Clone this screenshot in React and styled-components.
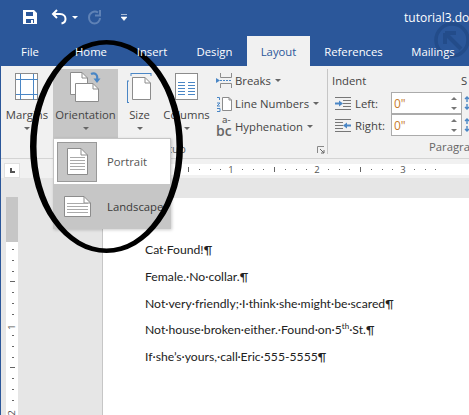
import styled, { createGlobalStyle } from "styled-components";

const blue = "#2b579a";
const iconBlue = "#4a86c5";
const line = "#8c8c8c";

const Global = createGlobalStyle`
  html, body { margin: 0; padding: 0; background: #fff; overflow: hidden; }
  body { width: 469px; height: 415px; }
  * { box-sizing: border-box; }
`;

const Window = styled.div`
  position: relative;
  width: 469px;
  height: 415px;
  overflow: hidden;
  font-family: "Open Sans", "Noto Sans", sans-serif;
  font-size: 11.3px;
  color: #444;
  background: #e6e6e6;
  border-left: 1px solid ${blue};
`;

const TitleBar = styled.div`
  height: 36px;
  margin-left: -1px;
  background: ${blue};
  display: flex;
  align-items: center;
  color: #fff;
  padding: 0 0 2px 22px;
`;
const Qat = styled.div`
  display: flex;
  align-items: center;
  width: 382px;
  flex: none;
  svg { flex: none; }
`;
const Title = styled.div`
  position: relative;
  z-index: 1;
  font-size: 12px;
  white-space: nowrap;
`;

const TabBar = styled.div`
  position: relative;
  height: 30px;
  margin-left: -1px;
  background: ${blue};
  display: flex;
`;
const Tab = styled.div`
  position: relative;
  z-index: 1;
  width: ${(p) => p.$w}px;
  flex: none;
  display: flex;
  align-items: center;
  justify-content: center;
  font-size: 11.3px;
  color: ${(p) => (p.$active ? blue : "#fff")};
  background: ${(p) => (p.$active ? "#f1f1f1" : "transparent")};
`;
const Watermark = styled.svg`
  position: absolute;
  right: -3px;
  top: -16px;
`;

const Ribbon = styled.div`
  height: 92px;
  background: #f1f1f1;
  display: flex;
  padding-top: 3px;
`;
const Group = styled.div`
  position: relative;
  width: ${(p) => p.$w}px;
  flex: none;
  display: flex;
  flex-direction: column;
  border-right: ${(p) => (p.$sep ? "1px solid #c6c6c6" : "none")};
  height: 85px;
`;
const GroupBody = styled.div`
  height: 69px;
  display: flex;
`;
const GroupLabel = styled.div`
  height: 15px;
  margin-top: 3px;
  padding-left: ${(p) => p.$left}px;
  line-height: 15px;
  color: #666;
  white-space: nowrap;
`;
const Expander = styled.svg`
  position: absolute;
  right: 2px;
  bottom: 0;
`;
const BigButton = styled.div`
  width: ${(p) => p.$w}px;
  flex: none;
  display: flex;
  flex-direction: column;
  align-items: center;
  background: ${(p) => (p.$on ? "#c6c6c6" : "transparent")};
  svg { flex: none; }
`;
const BigIcon = styled.div`
  height: 36px;
  display: flex;
  align-items: flex-start;
  justify-content: center;
`;
const BigLabel = styled.div`
  margin-top: 1px;
  height: 17px;
  line-height: 17px;
  white-space: nowrap;
`;
const Caret = styled.span`
  display: inline-block;
  flex: none;
  width: 0;
  height: 0;
  margin: ${(p) => p.$m || "0"};
  border-left: 3px solid transparent;
  border-right: 3px solid transparent;
  border-top: 3px solid ${(p) => p.$c || "#666"};
`;
const SmallStack = styled.div`
  display: flex;
  flex-direction: column;
  margin-left: 4px;
`;
const SmallRow = styled.div`
  height: 23px;
  display: flex;
  align-items: center;
  white-space: nowrap;
`;
const SmallIcon = styled.div`
  width: 19px;
  flex: none;
  display: flex;
  align-items: center;
`;
const Hyph = styled.span`
  position: relative;
  display: block;
  width: 17px;
  height: 18px;
  font-weight: 600;
  color: #666;
  span { position: absolute; }
  span:first-child { left: 6px; top: -2px; font-size: 9.5px; line-height: 8px; }
  span:last-child { left: 0; top: 7px; font-size: 14px; line-height: 11px; }
`;
const IndentHead = styled.div`
  height: 23px;
  line-height: 24px;
  padding-left: 4px;
`;
const IndentRow = styled.div`
  display: flex;
  align-items: center;
  height: 23px;
  padding-left: 7px;
`;
const IndentName = styled.div`
  width: 39px;
  flex: none;
  padding-left: 3px;
`;
const Spin = styled.div`
  width: 71px;
  height: 22px;
  flex: none;
  background: #fff;
  border: 1px solid #ababab;
  display: flex;
  align-items: center;
  justify-content: space-between;
  padding: 0 4px 0 2px;
  color: #c77b2c;
  font-size: 12px;
`;
const SpinArrows = styled.div`
  display: flex;
  flex-direction: column;
  gap: 7px;
`;
const SpinUp = styled.span`
  display: block;
  width: 0;
  height: 0;
  border-left: 3px solid transparent;
  border-right: 3px solid transparent;
  border-bottom: 3px solid #777;
`;
const SpinDown = styled(SpinUp)`
  border-bottom: none;
  border-top: 3px solid #777;
`;
const SpacingHead = styled.div`
  position: absolute;
  left: 133px;
  top: 0;
  line-height: 24px;
`;
const SpacingIcon = styled.svg`
  flex: none;
  margin-left: 2px;
`;

const RulerRow = styled.div`
  height: 20px;
  background: #f1f1f1;
  border-top: 1px solid #d4d4d4;
  display: flex;
  padding-top: 5px;
`;
const Corner = styled.div`
  width: 14px;
  height: 13px;
  margin-left: 4px;
  flex: none;
  background: #fff;
  box-shadow: 0 0 0 1px #e0e0e0;
  display: flex;
  align-items: center;
  justify-content: center;
`;
const CornerMark = styled.span`
  display: block;
  width: 5px;
  height: 5px;
  border-left: 2px solid #555;
  border-bottom: 2px solid #555;
`;
const HRuler = styled.svg`
  margin-left: 84px;
  flex: none;
  display: block;
`;

const Workspace = styled.div`
  display: flex;
  height: 237px;
  background: #e6e6e6;
`;
const VRuler = styled.svg`
  flex: none;
  margin: 19px 0 0 5px;
  display: block;
`;
const Gutter = styled.div`
  width: 85px;
  flex: none;
  border-right: 1px solid #c6c6c6;
  height: 100%;
`;
const Page = styled.div`
  flex: 1;
  margin-top: 20px;
  background: #fff;
  padding: 43px 0 0 42px;
  font-family: "Lato", "Open Sans", sans-serif;
  font-size: 12.2px;
  color: #222;
`;
const Para = styled.div`
  height: 26.75px;
  line-height: 18px;
  white-space: nowrap;
  sup { font-size: 8px; line-height: 0; }
`;

const Menu = styled.div`
  position: absolute;
  left: 52px;
  top: 138px;
  width: 118px;
  height: 91px;
  background: #fff;
  border: 1px solid #c6c6c6;
  box-shadow: 1px 1px 3px rgba(0, 0, 0, 0.2);
  display: flex;
  flex-direction: column;
`;
const MenuRow = styled.div`
  height: ${(p) => p.$h}px;
  flex: none;
  display: flex;
  align-items: center;
  background: ${(p) => (p.$on ? "#c6c6c6" : "transparent")};
  color: ${(p) => (p.$on ? "#3a3a3a" : "#555")};
`;
const MenuIcon = styled.div`
  width: 40px;
  height: 40px;
  margin-left: 3px;
  flex: none;
  display: flex;
  align-items: center;
  justify-content: center;
  background: ${(p) => (p.$on ? "#c6c6c6" : "transparent")};
  border: 1px solid ${(p) => (p.$on ? "#999" : "transparent")};
`;
const MenuLabel = styled.div`
  margin-left: 10px;
  white-space: nowrap;
`;
const Ring = styled.svg`
  position: absolute;
  left: 0;
  top: 0;
  pointer-events: none;
`;

const Sheet = ({ w, h }) => {
  const fold = Math.round(Math.min(w, h) * 0.33);
  return (
    <>
      <path d={`M.5 .5H${w - fold}L${w - 0.5} ${fold}V${h - 0.5}H.5Z`} fill="#fff" stroke={line} />
      <path d={`M${w - fold} .5V${fold}H${w - 0.5}`} fill="none" stroke={line} />
    </>
  );
};

const MarginsIcon = () => (
  <svg width="24" height="28" style={{ marginTop: 4 }}>
    <rect x=".5" y=".5" width="22" height="26" fill="#fff" stroke={line} />
    <path d="M5.5 1V27M18.5 1V27M1 6.5H23M1 21.5H23" stroke={iconBlue} fill="none" />
  </svg>
);
const OrientationIcon = () => (
  <svg width="32" height="31" style={{ marginTop: 3 }}>
    <Sheet w={18} h={23} />
    <g transform="translate(5 11)">
      <Sheet w={24} h={19} />
    </g>
    <path d="M21 2C25 0 28 3 27 7" fill="none" stroke={iconBlue} strokeWidth="2.2" />
    <path d="M23.5 6.5H30.5L27 11Z" fill={iconBlue} />
  </svg>
);
const SizeIcon = () => (
  <svg width="26" height="30" style={{ marginTop: 4 }}>
    <path d="M4 .5H24M4 0V3M24 0V3M.5 8V30M0 8H2M0 29.5H2" stroke={iconBlue} fill="none" />
    <g transform="translate(5 4)">
      <Sheet w={19} h={23} />
    </g>
  </svg>
);
const ColumnsIcon = () => (
  <svg width="24" height="28" style={{ marginTop: 4 }}>
    <rect x=".5" y=".5" width="22" height="26" fill="#fff" stroke={line} />
    <path d="M3 9.5H10M13 9.5H20M3 12.5H10M13 12.5H20M3 15.5H10M13 15.5H20M3 18.5H10M13 18.5H20M3 21.5H10M13 21.5H20" stroke={iconBlue} fill="none" />
  </svg>
);
const BreaksIcon = () => (
  <svg width="16" height="16">
    <path d="M4.5 0V4.5H15.5V0M4.5 15V10.5H15.5V15" fill="none" stroke={line} />
    <path d="M0 5L4 7.5L0 10Z" fill={iconBlue} />
    <path d="M4 7.5H16" stroke={iconBlue} strokeDasharray="2 1" />
  </svg>
);
const LineNumbersIcon = () => (
  <svg width="17" height="16">
    <g transform="translate(6 1)">
      <Sheet w={10} h={14} />
    </g>
    <path d="M1 1.5H3.5V4M1 7H4L1 10H4M1 12.5H4V15.5H1" fill="none" stroke={iconBlue} />
  </svg>
);
const IndentLeftIcon = () => (
  <svg width="17" height="13">
    <path d="M0 .5H16M8 3.5H16M8 6.5H16M8 9.5H16M0 12.5H16" stroke="#777" fill="none" />
    <path d="M0 5.5H4V3.5L8 6.5L4 9.5V7.5H0Z" fill={iconBlue} />
  </svg>
);
const IndentRightIcon = () => (
  <svg width="17" height="13">
    <path d="M0 .5H16M0 3.5H8M0 6.5H8M0 9.5H8M0 12.5H16" stroke="#777" fill="none" />
    <path d="M16 5.5H12V3.5L8 6.5L12 9.5V7.5H16Z" fill={iconBlue} />
  </svg>
);
const SpaceIcon = ({ flip }) => (
  <SpacingIcon width="6" height="14" style={flip ? { transform: "scaleY(-1)" } : undefined}>
    <path d="M3 1V6M3 8V13M1 3L3 1L5 3M1 11L3 13L5 11" fill="none" stroke={iconBlue} strokeWidth="1.4" />
  </SpacingIcon>
);
const Lined = ({ w, h, n, x = 4, y = 5, gap = 3 }) => (
  <svg width={w} height={h}>
    <Sheet w={w} h={h} />
    <path
      d={Array.from({ length: n }, (_, i) => `M${x} ${y + i * gap + 0.5}H${w - x}`).join("")}
      stroke="#aaa"
      fill="none"
    />
  </svg>
);

const hTicks = [];
for (let i = 0; i < 28; i++) hTicks.push(i);

const HorizontalRuler = () => (
  <HRuler width="366" height="11">
    <rect width="42" height="11" fill="#c6c6c6" />
    <rect x="42" width="324" height="11" fill="#fff" />
    {hTicks.map((i) => {
      const x = 42 + i * 10.75;
      if (i % 8 === 0) return null;
      const long = i % 4 === 0;
      return (
        <rect
          key={i}
          x={Math.round(x)}
          y={long ? 3 : 5}
          width="1"
          height={long ? 5 : 1}
          fill="#666"
        />
      );
    })}
    {[1, 2, 3].map((n) => (
      <text key={n} x={42 + n * 86} y="9" fontSize="9.5" fill="#555" textAnchor="middle" fontFamily="Open Sans">
        {n}
      </text>
    ))}
  </HRuler>
);

const VerticalRuler = () => (
  <VRuler width="12" height="218">
    <rect width="12" height="218" fill="#fff" />
    <rect width="12" height="45" fill="#c6c6c6" />
    {Array.from({ length: 20 }, (_, i) => i).map((i) => {
      const y = 52 + i * 10.75;
      if ((i - 7) % 8 === 0) return null;
      const long = (i - 3) % 8 === 0;
      return (
        <rect
          key={i}
          x={long ? 4 : 6}
          y={Math.round(y)}
          width={long ? 5 : 2}
          height="1"
          fill="#666"
        />
      );
    })}
    {[1, 2].map((n) => (
      <text
        key={n}
        transform={`translate(9 ${130 + (n - 1) * 86}) rotate(-90)`}
        fontSize="9.5"
        fill="#555"
        textAnchor="middle"
        fontFamily="Open Sans"
      >
        {n}
      </text>
    ))}
  </VRuler>
);

export default function App() {
  return (
    <>
      <Global />
      <Window>
        <TitleBar>
          <Qat>
            <svg width="16" height="16" fill="#fff">
              <path fillRule="evenodd" d="M1 1H12L15 4V15H1ZM4 3V7H11V3ZM4 10V14H12V10Z" />
              <rect x="9" y="11" width="2" height="3" />
            </svg>
            <svg width="18" height="16" style={{ marginLeft: 13 }}>
              <path d="M6 1L2 5L6 9" fill="none" stroke="#fff" strokeWidth="2" />
              <path d="M2 5H9C13 5 14.5 8 14.5 10C14.5 12 13 14 10.5 14.5" fill="none" stroke="#fff" strokeWidth="2" />
            </svg>
            <Caret $c="#fff" $m="0 0 0 3px" />
            <svg width="15" height="16" style={{ marginLeft: 9 }}>
              <path d="M11 3.5C7 1 2 4 2 8.5C2 12 4.5 14.5 7.5 14.5C10.5 14.5 13 12 13 9" fill="none" stroke="#5f82b6" strokeWidth="2" />
              <path d="M13 1V6.5H8" fill="none" stroke="#5f82b6" strokeWidth="2" />
            </svg>
            <svg width="6" height="7" style={{ marginLeft: 19 }}>
              <path d="M0 .5H6M0 3H6L3 6.5Z" fill="#fff" stroke="#fff" strokeWidth=".6" />
            </svg>
          </Qat>
          <Title>tutorial3.doc</Title>
        </TitleBar>
        <TabBar>
          <Tab $w={60}>File</Tab>
          <Tab $w={62}>Home</Tab>
          <Tab $w={60}>Insert</Tab>
          <Tab $w={65}>Design</Tab>
          <Tab $w={63} $active>Layout</Tab>
          <Tab $w={87}>References</Tab>
          <Tab $w={72}>Mailings</Tab>
          <Watermark width="40" height="40" viewBox="0 0 40 40">
            <circle cx="20" cy="20" r="16" fill="none" stroke="#234c8a" strokeWidth="3.5" />
            <path d="M13 13H24M13 13V24M13 13L29 29" fill="none" stroke="#234c8a" strokeWidth="4" />
          </Watermark>
        </TabBar>
        <Ribbon>
          <Group $w={327} $sep>
            <GroupBody>
              <BigButton $w={52}>
                <BigIcon><MarginsIcon /></BigIcon>
                <BigLabel>Margins</BigLabel>
                <Caret $m="4px 0 0" />
              </BigButton>
              <BigButton $w={65} $on>
                <BigIcon><OrientationIcon /></BigIcon>
                <BigLabel>Orientation</BigLabel>
                <Caret $m="4px 0 0" />
              </BigButton>
              <BigButton $w={43}>
                <BigIcon><SizeIcon /></BigIcon>
                <BigLabel>Size</BigLabel>
                <Caret $m="4px 0 0" />
              </BigButton>
              <BigButton $w={51}>
                <BigIcon><ColumnsIcon /></BigIcon>
                <BigLabel>Columns</BigLabel>
                <Caret $m="4px 0 0" />
              </BigButton>
              <SmallStack>
                <SmallRow>
                  <SmallIcon><BreaksIcon /></SmallIcon>
                  Breaks<Caret $m="0 0 0 4px" />
                </SmallRow>
                <SmallRow>
                  <SmallIcon><LineNumbersIcon /></SmallIcon>
                  Line Numbers<Caret $m="0 0 0 4px" />
                </SmallRow>
                <SmallRow>
                  <SmallIcon>
                    <Hyph><span>a-</span><span>bc</span></Hyph>
                  </SmallIcon>
                  Hyphenation<Caret $m="0 0 0 4px" />
                </SmallRow>
              </SmallStack>
            </GroupBody>
            <GroupLabel $left={126}>Page Setup</GroupLabel>
            <Expander width="8" height="8">
              <path d="M.5 7V.5H7" fill="none" stroke="#888" />
              <path d="M3 3L7 7M7 4V7H4" fill="none" stroke="#666" />
            </Expander>
          </Group>
          <Group $w={142}>
            <IndentHead>Indent</IndentHead>
            <IndentRow>
              <IndentLeftIcon />
              <IndentName>Left:</IndentName>
              <Spin>
                0"
                <SpinArrows><SpinUp /><SpinDown /></SpinArrows>
              </Spin>
              <SpaceIcon />
            </IndentRow>
            <IndentRow>
              <IndentRightIcon />
              <IndentName>Right:</IndentName>
              <Spin>
                0"
                <SpinArrows><SpinUp /><SpinDown /></SpinArrows>
              </Spin>
              <SpaceIcon flip />
            </IndentRow>
            <SpacingHead>S</SpacingHead>
            <GroupLabel $left={101}>Paragraph</GroupLabel>
          </Group>
        </Ribbon>
        <RulerRow>
          <Corner><CornerMark /></Corner>
          <HorizontalRuler />
        </RulerRow>
        <Workspace>
          <VerticalRuler />
          <Gutter />
          <Page>
            <Para>Cat·Found!¶</Para>
            <Para>Female.·No·collar.¶</Para>
            <Para>Not·very·friendly;·I·think·she·might·be·scared¶</Para>
            <Para>Not·house·broken·either.·Found·on·5<sup>th</sup>·St.¶</Para>
            <Para>If·she’s·yours,·call·Eric·555-5555¶</Para>
          </Page>
        </Workspace>
        <Menu>
          <MenuRow $h={45}>
            <MenuIcon $on><Lined w={21} h={27} n={5} x={3} y={9} /></MenuIcon>
            <MenuLabel>Portrait</MenuLabel>
          </MenuRow>
          <MenuRow $h={44} $on>
            <MenuIcon><Lined w={27} h={21} n={4} x={3} y={7} /></MenuIcon>
            <MenuLabel>Landscape</MenuLabel>
          </MenuRow>
        </Menu>
        <Ring width="469" height="415">
          <path
            fillRule="evenodd"
            d="M29 146.5a76.5 106.5 0 1 0 153 0a76.5 106.5 0 1 0 -153 0ZM35.5 146.5a70 102 0 1 0 140 0a70 102 0 1 0 -140 0Z"
            fill="#000"
          />
        </Ring>
      </Window>
    </>
  );
}
